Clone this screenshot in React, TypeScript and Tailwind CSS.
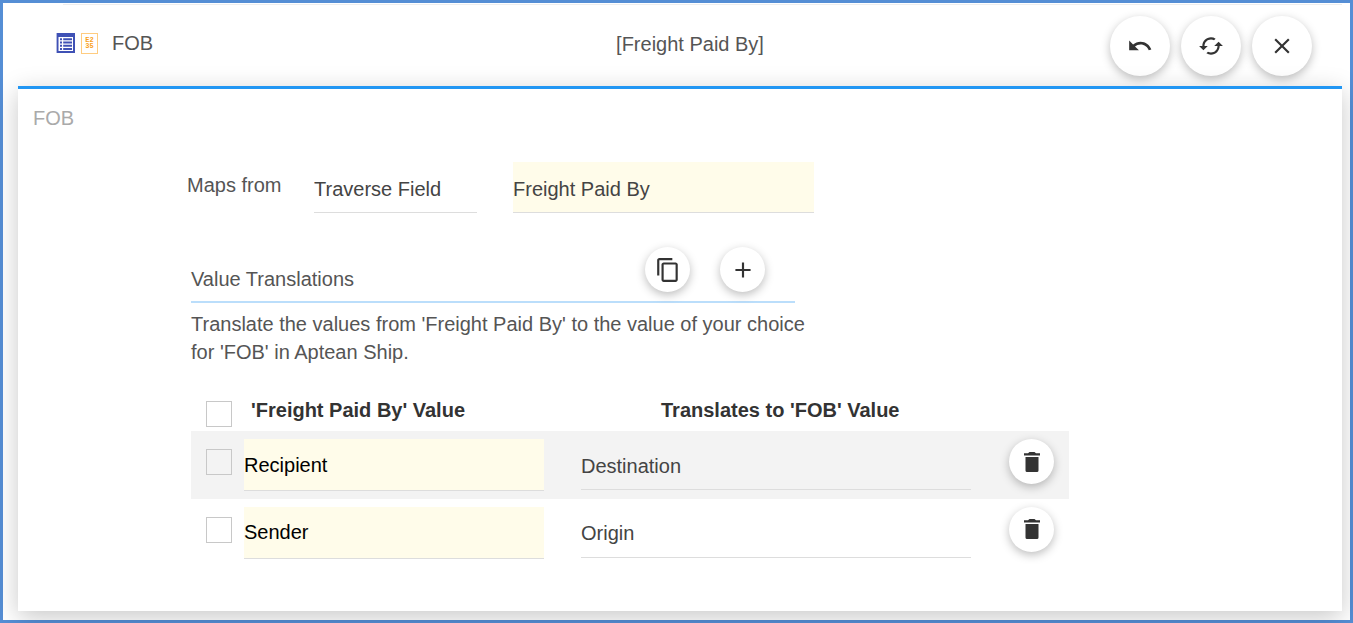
import type { ReactNode } from "react";
import { MdAdd, MdCached, MdClose, MdContentCopy, MdUndo } from "react-icons/md";

const translations = [
  { id: "recipient", from: "Recipient", to: "Destination" },
  { id: "sender", from: "Sender", to: "Origin" },
];

function RoundButton({ label, large, children }: { label: string; large?: boolean; children: ReactNode }) {
  return (
    <button
      type="button"
      aria-label={label}
      className={`flex shrink-0 items-center justify-center rounded-full bg-white text-[26px] text-[#333] shadow-[0_3px_10px_rgba(0,0,0,0.26)] ${
        large ? "size-[60px]" : "size-[45px]"
      }`}
    >
      {children}
    </button>
  );
}

function Tick({ label }: { label: string }) {
  return (
    <input
      type="checkbox"
      aria-label={label}
      className="block size-[26px] appearance-none border border-[#c8c8c8] checked:bg-[#2196f3]"
    />
  );
}

function ListIcon() {
  return (
    <svg viewBox="0 0 19 20" className="h-5 w-[19px]" aria-hidden="true">
      <path fill="#3f51b5" d="M0.600 0H19v20H0.600z" />
      <path fill="#fff" d="M2.500 4H17v14H2.500z" />
      <path
        fill="#3f51b5"
        d="M4 5.200h2v2H4zM7.200 5.200h8.800v2H7.200zM4 8.500h2v2H4zM7.200 8.500h8.800v2H7.200zM4 11.800h2v2H4zM7.200 11.800h8.800v2H7.200zM4 15.100h2v2H4zM7.200 15.100h8.800v2H7.200z"
      />
    </svg>
  );
}

function TrashIcon() {
  return (
    <svg viewBox="0 0 16 20" className="h-5 w-4" fill="currentColor" aria-hidden="true">
      <path d="M0 1.200h4L5.500 0h5L12 1.200h4V3.500H0zM1.500 5h13v13.500q0 1.500-1.500 1.500H3q-1.500 0-1.500-1.500z" />
    </svg>
  );
}

export default function App() {
  return (
    <div className="flex min-h-screen flex-col border-[3px] border-[#558ed5] bg-white pt-px pr-2 pb-[9px] pl-[15px] font-['Liberation_Sans',Arial,sans-serif] text-[20px] leading-7 text-[#555]">
      <div className="ml-[45px] border-t border-[#eee]" />
      <header className="grid h-[81px] grid-cols-[1fr_auto_1fr] items-start pt-[11px] pr-[30px] pl-[38px]">
        <div className="flex items-center pt-[13px]">
          <ListIcon />
          <span className="ml-[6px] flex h-[21px] w-[17px] flex-col items-center justify-center border border-[#ffcc80] font-['Liberation_Mono',monospace] text-[7px] leading-[6px] font-bold text-[#f9a01b]">
            <span>E2</span>
            <span>35</span>
          </span>
          <h1 className="ml-[14px]">FOB</h1>
        </div>
        <p className="pt-[14px] pl-3">[Freight Paid By]</p>
        <div className="flex justify-end gap-[11px]">
          <RoundButton label="Undo" large><MdUndo /></RoundButton>
          <RoundButton label="Refresh" large><MdCached /></RoundButton>
          <RoundButton label="Close" large><MdClose /></RoundButton>
        </div>
      </header>

      <main className="grow border-t-[3px] border-[#2196f3] bg-white pt-[15px] pb-11 shadow-[0_6px_24px_rgba(0,0,0,0.22)]">
        <h2 className="pl-[15px] text-[#aaa]">FOB</h2>

        <div className="flex items-start pt-[30px] pl-[169px]">
          <label htmlFor="source" className="w-[127px] pt-[9px]">Maps from</label>
          <input
            id="source"
            defaultValue="Traverse Field"
            className="h-[51px] w-[163px] border-b border-[#ddd] pt-1 text-[#444] outline-none"
          />
          <input
            aria-label="Field name"
            defaultValue="Freight Paid By"
            className="ml-9 h-[51px] w-[301px] border-b border-[#ddd] bg-[#fffcea] pt-1 text-[#444] outline-none"
          />
        </div>

        <section className="pt-[34px] pl-[173px]">
          <div className="flex h-14 w-[604px] items-start border-b-2 border-[#bbdefb] pr-[30px]">
            <h3 className="grow pt-[18px]">Value Translations</h3>
            <div className="flex gap-[30px]">
              <RoundButton label="Copy translations"><MdContentCopy /></RoundButton>
              <RoundButton label="Add translation"><MdAdd /></RoundButton>
            </div>
          </div>
          <p className="w-[620px] pt-[7px]">
            Translate the values from 'Freight Paid By' to the value of your choice for 'FOB' in Aptean Ship.
          </p>

          <table className="mt-[29px] w-[878px] table-fixed border-collapse text-left">
            <colgroup>
              <col className="w-[53px]" />
              <col className="w-[337px]" />
              <col className="w-[428px]" />
              <col className="w-[60px]" />
            </colgroup>
            <thead className="text-[#333]">
              <tr className="h-9">
                <th className="pt-[2px] pl-[15px]"><Tick label="Select all" /></th>
                <th className="pb-[6px] pl-[7px]">'Freight Paid By' Value</th>
                <th className="pb-[6px] pl-20">Translates to 'FOB' Value</th>
                <td />
              </tr>
            </thead>
            <tbody>
              {translations.map((row) => (
                <tr key={row.id} className="h-[67px] odd:h-[68px] odd:bg-[#f3f3f3]">
                  <td className="pb-[6px] pl-[15px]"><Tick label={`Select ${row.from}`} /></td>
                  <td>
                    <input
                      aria-label="'Freight Paid By' Value"
                      defaultValue={row.from}
                      className="block h-[52px] w-[300px] border-b border-[#ddd] bg-[#fffcea] pt-px text-black outline-none"
                    />
                  </td>
                  <td>
                    <input
                      aria-label="Translates to 'FOB' Value"
                      defaultValue={row.to}
                      className="block h-[50px] w-[390px] border-b border-[#ddd] pt-[3px] text-[#444] outline-none"
                    />
                  </td>
                  <td className="pb-[7px]">
                    <RoundButton label={`Delete ${row.from}`}><TrashIcon /></RoundButton>
                  </td>
                </tr>
              ))}
            </tbody>
          </table>
        </section>
      </main>
    </div>
  );
}
